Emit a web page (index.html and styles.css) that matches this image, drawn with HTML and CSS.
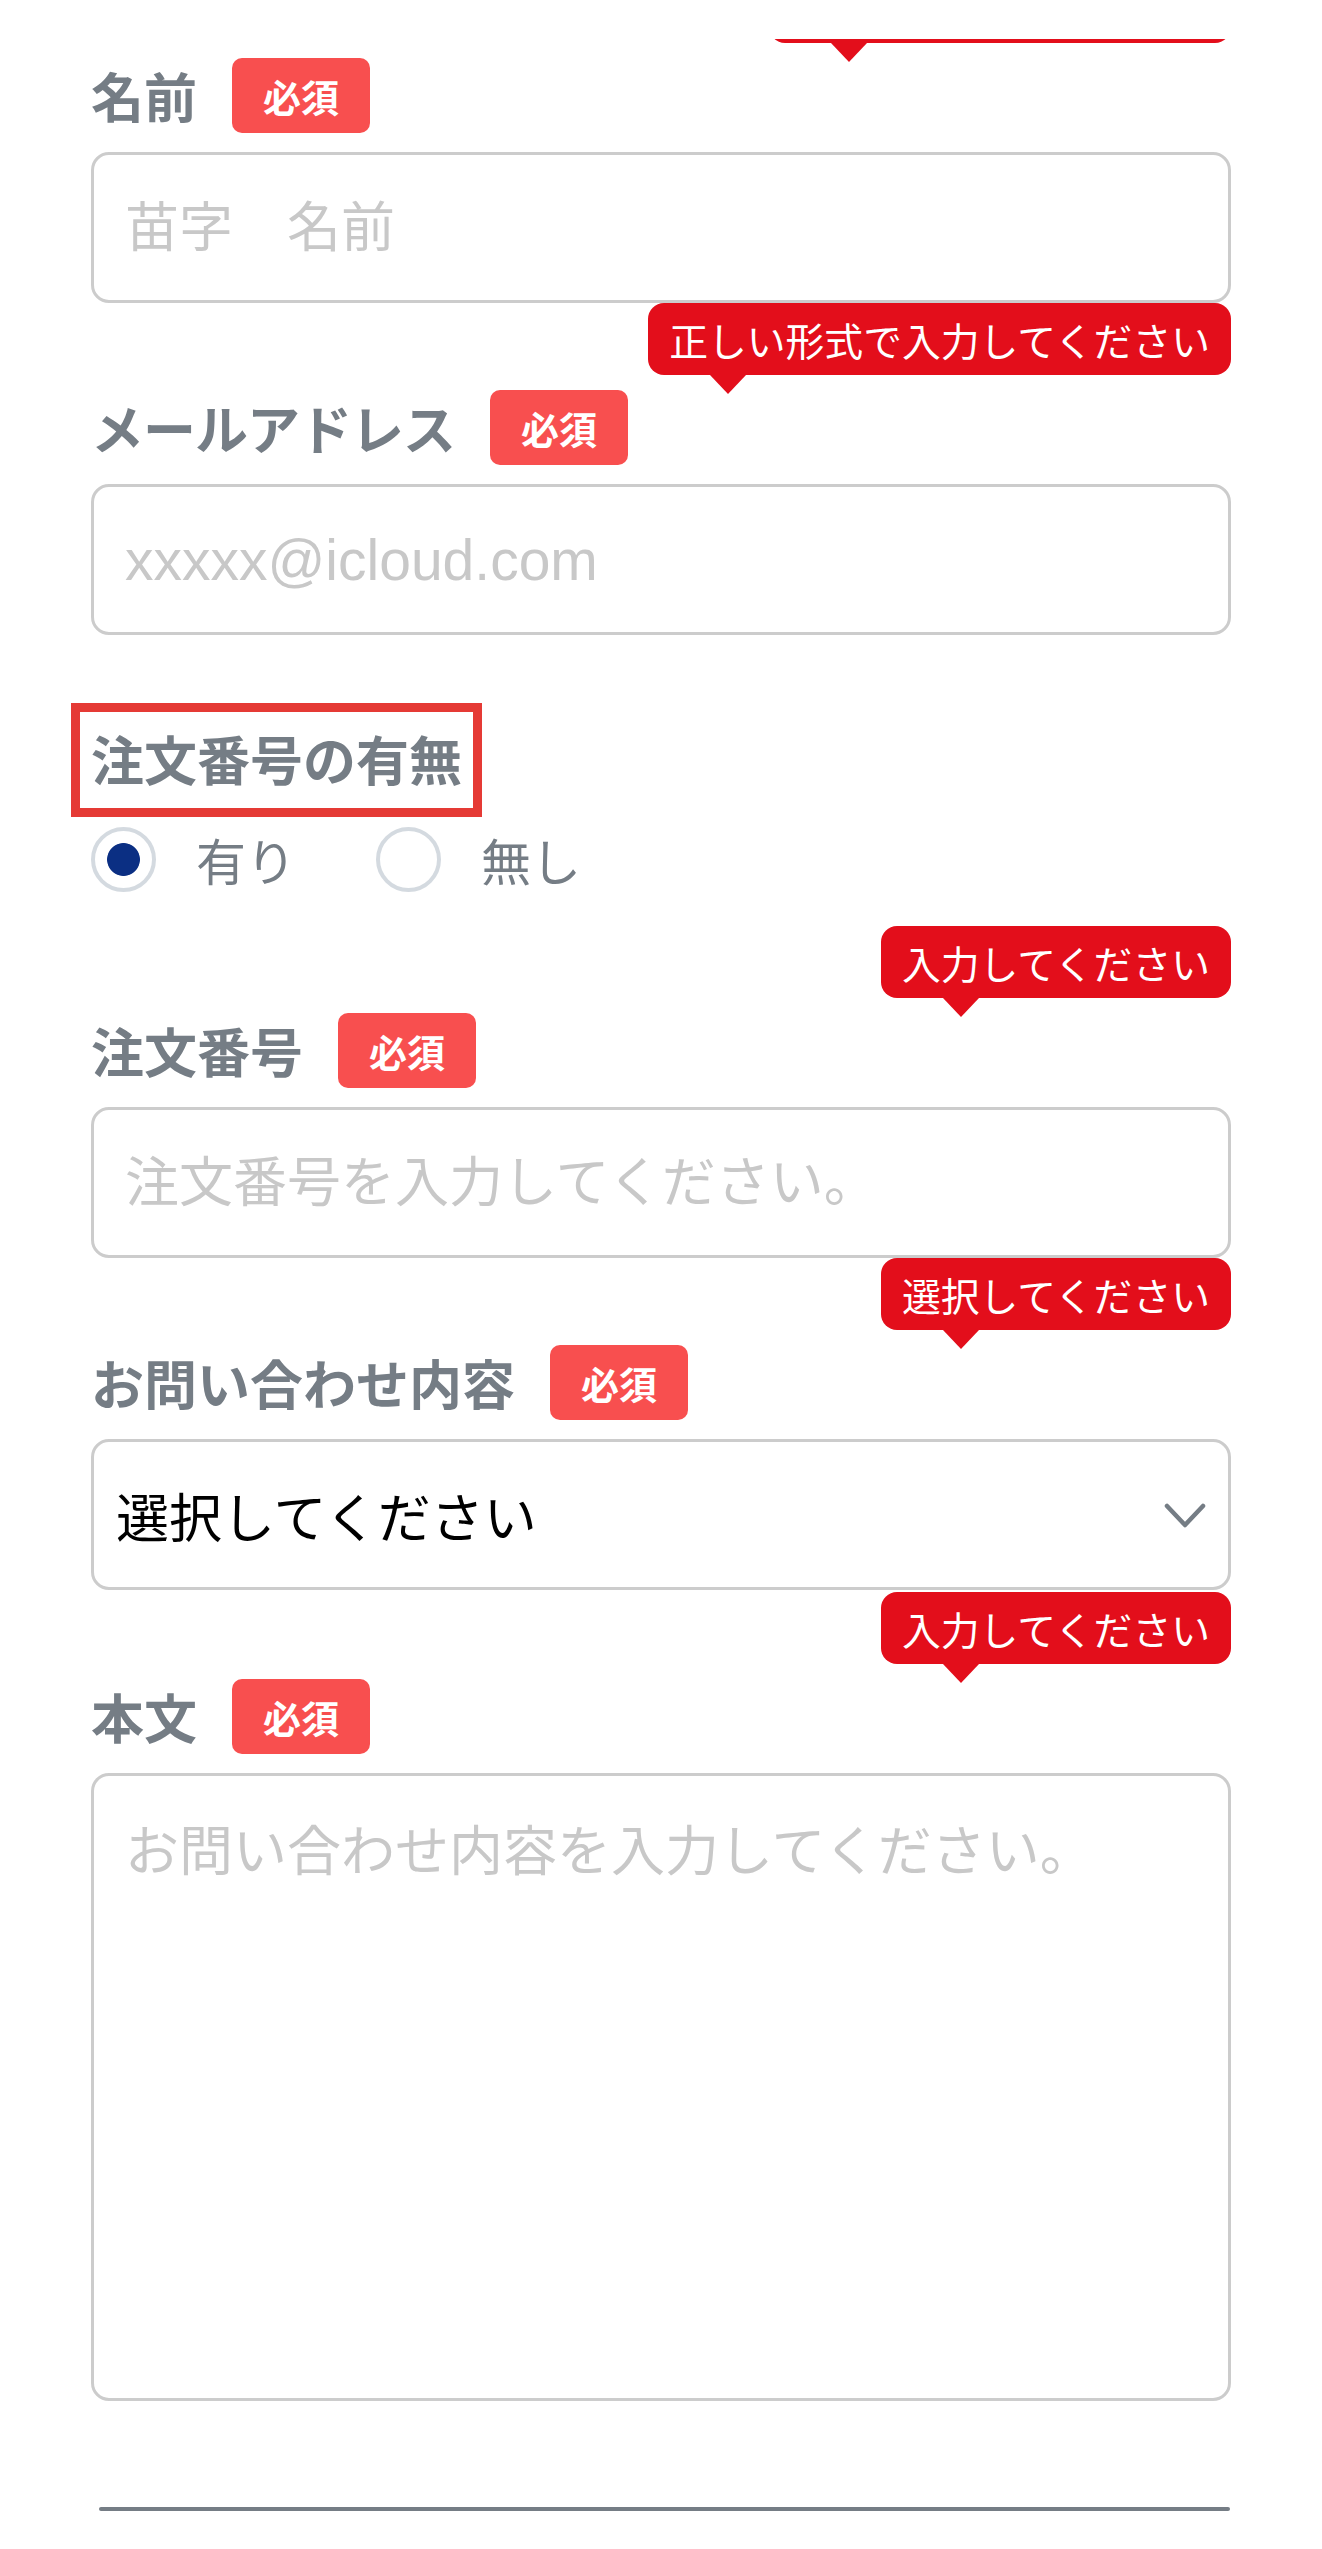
FILE: index.html
```html
<!DOCTYPE html>
<html lang="ja">
<head>
<meta charset="utf-8">
<title>お問い合わせ</title>
<link rel="stylesheet" href="styles.css">
</head>
<body>
<div class="top-cover"></div>
<main class="form">
  <div class="field">
    <div class="label-row"><span class="label">名前</span><span class="badge">必須</span></div>
    <input class="text-input" type="text" placeholder="苗字　名前">
    <div class="tooltip tooltip-stub" aria-hidden="true"></div>
  </div>

  <div class="field">
    <div class="label-row"><span class="label label-kana">メールアドレス</span><span class="badge">必須</span></div>
    <input class="text-input text-input-latin" type="email" placeholder="xxxxx@icloud.com">
    <div class="tooltip">正しい形式で入力してください</div>
  </div>

  <div class="radio-field">
    <div class="legend"><span class="label legend-text">注文番号の有無</span></div>
    <div class="radios">
      <label class="radio"><input type="radio" name="has" checked><span>有り</span></label>
      <label class="radio"><input type="radio" name="has"><span>無し</span></label>
    </div>
  </div>

  <div class="field field-after-radio">
    <div class="label-row"><span class="label">注文番号</span><span class="badge">必須</span></div>
    <input class="text-input" type="text" placeholder="注文番号を入力してください。">
    <div class="tooltip">入力してください</div>
  </div>

  <div class="field">
    <div class="label-row"><span class="label">お問い合わせ内容</span><span class="badge">必須</span></div>
    <div class="select-wrap">
      <select class="select">
        <option>選択してください</option>
      </select>
      <svg class="chevron" viewBox="0 0 42 26" aria-hidden="true"><path d="M3 3 L21 22 L39 3" fill="none" stroke="#757d85" stroke-width="4.5" stroke-linecap="round" stroke-linejoin="round"/></svg>
    </div>
    <div class="tooltip">選択してください</div>
  </div>

  <div class="field field-last">
    <div class="label-row"><span class="label">本文</span><span class="badge">必須</span></div>
    <textarea class="textarea" placeholder="お問い合わせ内容を入力してください。"></textarea>
    <div class="tooltip">入力してください</div>
  </div>

  <div class="divider"></div>
</main>
</body>
</html>
```
FILE: styles.css
```css
html, body {
  margin: 0;
  padding: 0;
  background: #ffffff;
}

body {
  font-family: "Noto Sans CJK JP", sans-serif;
  position: relative;
  overflow: hidden;
}

.top-cover {
  position: absolute;
  top: 0;
  left: 0;
  right: 0;
  height: 39px;
  background: #ffffff;
  z-index: 5;
}

.form {
  padding: 58px 91px 0;
}

.field {
  position: relative;
}

.field + .field {
  margin-top: 87px;
}

.field.field-after-radio {
  margin-top: 121px;
}

.field.field-last {
  margin-top: 89px;
}

.label-row {
  display: flex;
  align-items: center;
  gap: 35px;
  height: 75px;
}

.label {
  font-size: 53px;
  font-weight: 700;
  color: #757d85;
  line-height: 1;
  white-space: nowrap;
}

.label-kana {
  letter-spacing: -1px;
}

.badge {
  display: block;
  height: 75px;
  line-height: 75px;
  padding: 0 31px;
  font-size: 38px;
  font-weight: 700;
  color: #ffffff;
  background: #f84f4f;
  border-radius: 10px;
}

.text-input,
.select,
.textarea {
  display: block;
  width: 100%;
  box-sizing: border-box;
  margin: 19px 0 0;
  border: 3px solid #cccccc;
  border-radius: 18px;
  background: #ffffff;
  color: #000000;
  font-family: "Liberation Sans", "Noto Sans CJK JP", sans-serif;
  font-size: 54px;
  outline: none;
}

.text-input {
  height: 151px;
  padding: 0 31px;
}

.text-input-latin {
  font-size: 57px;
}

.text-input::placeholder,
.textarea::placeholder {
  color: #c8c8c8;
  opacity: 1;
}

.select-wrap {
  position: relative;
  margin-top: 19px;
}

.select {
  margin-top: 0;
  height: 151px;
  padding: 0 90px 0 22px;
  font-family: "Noto Sans CJK JP", sans-serif;
  font-size: 53px;
  -webkit-appearance: none;
  appearance: none;
}

.chevron {
  position: absolute;
  right: 25px;
  top: 50%;
  width: 42px;
  height: 26px;
  margin-top: -12px;
  pointer-events: none;
}

.textarea {
  height: 628px;
  padding: 36px 31px;
  line-height: 1.5;
  resize: none;
}

.tooltip {
  position: absolute;
  right: 0;
  top: -87px;
  height: 72px;
  line-height: 72px;
  padding: 0 21px;
  font-size: 38.8px;
  color: #ffffff;
  background: #e30e1b;
  border-radius: 16px;
  white-space: nowrap;
  z-index: 2;
}

.tooltip-stub {
  width: 420px;
}

.tooltip::after {
  content: "";
  position: absolute;
  left: 62px;
  top: 100%;
  border-left: 18px solid transparent;
  border-right: 18px solid transparent;
  border-top: 19px solid #e30e1b;
}

.radio-field {
  margin-top: 68px;
}

.legend {
  display: inline-block;
  border: 9px solid #e53a35;
  padding: 14px 11px 18px;
  margin-left: -20px;
}

.legend-text {
  display: block;
  line-height: 64px;
}

.radios {
  display: flex;
  gap: 80px;
  margin-top: 10px;
}

.radio {
  display: flex;
  align-items: center;
  gap: 40px;
  font-size: 50px;
  color: #757d85;
  line-height: 65px;
}

.radio input {
  -webkit-appearance: none;
  appearance: none;
  margin: 0;
  width: 65px;
  height: 65px;
  box-sizing: border-box;
  border: 4px solid #d4dae0;
  border-radius: 50%;
  background: #ffffff;
}

.radio input:checked {
  background: radial-gradient(circle, #0b2f83 0 16px, #ffffff 16.8px);
}

.divider {
  margin: 106px 1px 0 8px;
  height: 4px;
  background: #757d85;
  border-radius: 2px;
}
```
